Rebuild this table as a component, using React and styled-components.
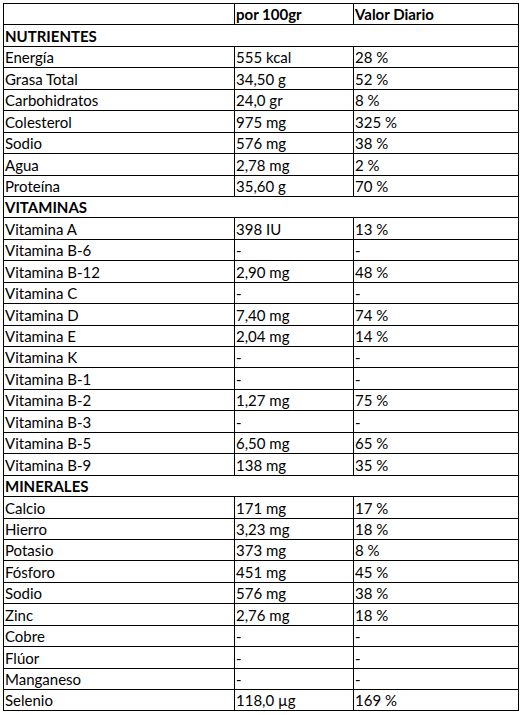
import React from "react";
import styled, { createGlobalStyle } from "styled-components";

const GlobalStyle = createGlobalStyle`
    body {
        margin: 0;
        background: #ffffff;
        font-family: Lato, "Liberation Sans", Arial, sans-serif;
    }
`;

const Page = styled.div`
    padding: 3px 0 0 3px;
`;

const Table = styled.table`
    border-collapse: collapse;
    width: 515px;
    table-layout: fixed;
    color: #000;
    font-size: 15px;
`;

const Col = styled.col`
    width: ${(p) => p.w}px;
`;

const Row = styled.tr`
    height: 21.45px;
`;

const Cell = styled.td`
    border: 1px solid #000;
    padding: 0 0 0 1px;
    vertical-align: bottom;
    line-height: 19px;
    font-weight: ${(p) => (p.bold ? 700 : 400)};
    white-space: nowrap;
    overflow: hidden;
`;

const sections = [
    {
        title: "NUTRIENTES",
        rows: [
            ["Energía", "555 kcal", "28 %"],
            ["Grasa Total", "34,50 g", "52 %"],
            ["Carbohidratos", "24,0 gr", "8 %"],
            ["Colesterol", "975 mg", "325 %"],
            ["Sodio", "576 mg", "38 %"],
            ["Agua", "2,78 mg", "2 %"],
            ["Proteína", "35,60 g", "70 %"],
        ],
    },
    {
        title: "VITAMINAS",
        rows: [
            ["Vitamina A", "398 IU", "13 %"],
            ["Vitamina B-6", "-", "-"],
            ["Vitamina B-12", "2,90 mg", "48 %"],
            ["Vitamina C", "-", "-"],
            ["Vitamina D", "7,40 mg", "74 %"],
            ["Vitamina E", "2,04 mg", "14 %"],
            ["Vitamina K", "-", "-"],
            ["Vitamina B-1", "-", "-"],
            ["Vitamina B-2", "1,27 mg", "75 %"],
            ["Vitamina B-3", "-", "-"],
            ["Vitamina B-5", "6,50 mg", "65 %"],
            ["Vitamina B-9", "138 mg", "35 %"],
        ],
    },
    {
        title: "MINERALES",
        rows: [
            ["Calcio", "171 mg", "17 %"],
            ["Hierro", "3,23 mg", "18 %"],
            ["Potasio", "373 mg", "8 %"],
            ["Fósforo", "451 mg", "45 %"],
            ["Sodio", "576 mg", "38 %"],
            ["Zinc", "2,76 mg", "18 %"],
            ["Cobre", "-", "-"],
            ["Flúor", "-", "-"],
            ["Manganeso", "-", "-"],
            ["Selenio", "118,0 µg", "169 %"],
        ],
    },
];

export default function App() {
    return (
        <Page>
            <GlobalStyle />
            <Table>
                <colgroup>
                    <Col w={231} />
                    <Col w={119} />
                    <Col w={165} />
                </colgroup>
                <tbody>
                    <Row>
                        <Cell></Cell>
                        <Cell bold>por 100gr</Cell>
                        <Cell bold>Valor Diario</Cell>
                    </Row>
                    {sections.map((section) => (
                        <React.Fragment key={section.title}>
                            <Row>
                                <Cell bold colSpan={3}>{section.title}</Cell>
                            </Row>
                            {section.rows.map((r, i) => (
                                <Row key={section.title + i}>
                                    <Cell>{r[0]}</Cell>
                                    <Cell>{r[1]}</Cell>
                                    <Cell>{r[2]}</Cell>
                                </Row>
                            ))}
                        </React.Fragment>
                    ))}
                </tbody>
            </Table>
        </Page>
    );
}
